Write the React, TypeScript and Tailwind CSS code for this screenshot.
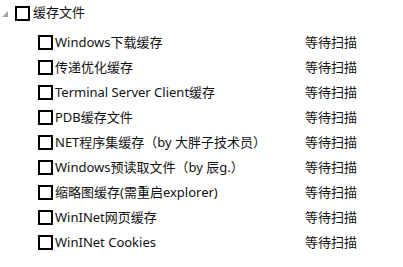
const items = [
  "Windows下载缓存",
  "传递优化缓存",
  "Terminal Server Client缓存",
  "PDB缓存文件",
  "NET程序集缓存（by 大胖子技术员）",
  "Windows预读取文件（by 辰g.）",
  "缩略图缓存(需重启explorer)",
  "WinINet网页缓存",
  "WinINet Cookies",
];

function Box() {
  return <span className="block w-[15px] h-[15px] border-2 border-black bg-white shrink-0" />;
}

export default function App() {
  return (
    <div
      className="w-[403px] h-[267px] bg-white text-[13px] text-[#111] overflow-hidden"
      style={{ fontFamily: '"Segoe UI", "Noto Sans", "Noto Sans CJK SC", sans-serif' }}
    >
      <div className="flex items-center h-[26px] pl-[2px]">
        <svg width="6" height="6" viewBox="0 0 6 6" className="mr-[7px] mt-[2px]">
          <polygon points="6,0 6,6 0,6" fill="#a6a6a6" />
        </svg>
        <Box />
        <span className="ml-[3px]">缓存文件</span>
      </div>
      <div className="mt-[4px]">
        {items.map((t) => (
          <div key={t} className="flex items-center h-[25px]">
            <div className="flex items-center w-[305px] pl-[38px]">
              <Box />
              <span className="ml-[2px] whitespace-nowrap">{t}</span>
            </div>
            <span>等待扫描</span>
          </div>
        ))}
      </div>
    </div>
  );
}
